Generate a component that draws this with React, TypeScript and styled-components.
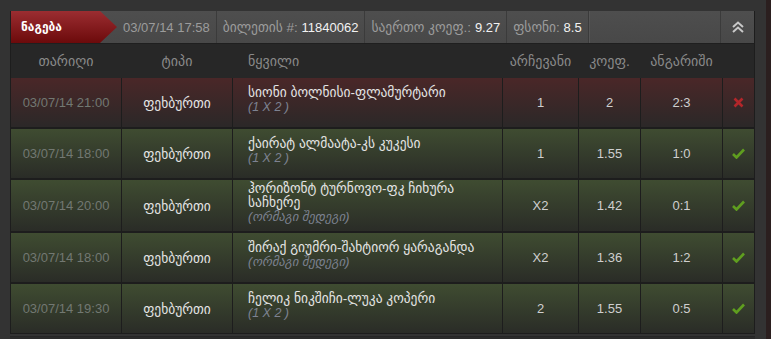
import styled, { createGlobalStyle } from "styled-components";

type Bet = {
  date: string;
  type: string;
  name: string;
  market: string;
  pick: string;
  odds: string;
  score: string;
  won: boolean;
};

const bets: Bet[] = [
  { date: "03/07/14 21:00", type: "ფეხბურთი", name: "სიონი ბოლნისი-ფლამურტარი", market: "(1 X 2 )", pick: "1", odds: "2", score: "2:3", won: false },
  { date: "03/07/14 18:00", type: "ფეხბურთი", name: "ქაირატ ალმაატა-კს კუკესი", market: "(1 X 2 )", pick: "1", odds: "1.55", score: "1:0", won: true },
  { date: "03/07/14 20:00", type: "ფეხბურთი", name: "ჰორიზონტ ტურნოვო-ფკ ჩიხურა საჩხერე", market: "(ორმაგი შედეგი)", pick: "X2", odds: "1.42", score: "0:1", won: true },
  { date: "03/07/14 18:00", type: "ფეხბურთი", name: "შირაქ გიუმრი-შახტიორ ყარაგანდა", market: "(ორმაგი შედეგი)", pick: "X2", odds: "1.36", score: "1:2", won: true },
  { date: "03/07/14 19:30", type: "ფეხბურთი", name: "ჩელიკ ნიკშიჩი-ლუკა კოპერი", market: "(1 X 2 )", pick: "2", odds: "1.55", score: "0:5", won: true },
];

const GlobalStyle = createGlobalStyle`
  body {
    margin: 0;
    background: #333333;
    font-family: "Liberation Sans", "DejaVu Sans", Arial, sans-serif;
    font-size: 13px;
  }
`;

const COLS = "110px 110px 269px 75px 61px 81px 31px";

export default function App() {
  return (
    <>
      <GlobalStyle />
      <Page>
        <Column>
          <Panel>
            <TicketBar>
              <Badge>ნაგება</Badge>
              <BarItem>
                <Value $dim>03/07/14 17:58</Value>
              </BarItem>
              <BarItem>
                ბილეთის #: <Value>11840062</Value>
              </BarItem>
              <BarItem>
                საერთო კოეფ.: <Value>9.27</Value>
              </BarItem>
              <BarItem>
                ფსონი: <Value>8.5</Value>
              </BarItem>
              <Spacer />
              <CollapseButton>
                <svg width="14" height="12" viewBox="0 0 14 12" fill="none" stroke="#c8c8c8" strokeWidth="2">
                  <path d="M2 6 L7 1.5 L12 6" />
                  <path d="M2 11 L7 6.5 L12 11" />
                </svg>
              </CollapseButton>
            </TicketBar>
            <HeadRow>
              <HeadCell>თარიღი</HeadCell>
              <HeadCell>ტიპი</HeadCell>
              <HeadCell $left>ნყვილი</HeadCell>
              <HeadCell>არჩევანი</HeadCell>
              <HeadCell>კოეფ.</HeadCell>
              <HeadCell>ანგარიში</HeadCell>
              <HeadCell />
            </HeadRow>
            <Body>
              {bets.map((b, i) => (
                <Row key={i} $won={b.won}>
                  <DateCell>{b.date}</DateCell>
                  <Cell>{b.type}</Cell>
                  <NameCell>
                    <span>{b.name}</span>
                    <Market>{b.market}</Market>
                  </NameCell>
                  <NumCell>{b.pick}</NumCell>
                  <NumCell>{b.odds}</NumCell>
                  <NumCell>{b.score}</NumCell>
                  <Cell>
                    {b.won ? (
                      <svg width="13" height="11" viewBox="0 0 13 11">
                        <path d="M1 6 L4.5 9.5 L12 1.5" fill="none" stroke="#5f9e1f" strokeWidth="2.6" />
                      </svg>
                    ) : (
                      <svg width="11" height="11" viewBox="0 0 11 11">
                        <path d="M1.5 1.5 L9.5 9.5 M9.5 1.5 L1.5 9.5" fill="none" stroke="#b3262a" strokeWidth="2.6" />
                      </svg>
                    )}
                  </Cell>
                </Row>
              ))}
            </Body>
          </Panel>
          <NextPanel />
        </Column>
        <SideStrip />
      </Page>
    </>
  );
}

const Page = styled.div`
  display: flex;
  height: 339px;
  overflow: hidden;
  padding: 11px 0 0 10px;
  box-sizing: border-box;
`;

const Column = styled.div`
  display: flex;
  flex-direction: column;
  gap: 2px;
`;

const Panel = styled.div`
  width: 745px;
  box-sizing: border-box;
  border: 1px solid #1d1d1d;
  border-top: none;
  background: #1d1d1d;
`;

const TicketBar = styled.div`
  display: flex;
  align-items: stretch;
  height: 32px;
  background: linear-gradient(#4e4e4e, #484848);
  border-bottom: 1px solid #1f1f1f;
  color: #9c9c9c;
  font-size: 13.5px;
`;

const Badge = styled.div`
  display: flex;
  align-items: center;
  width: 106px;
  padding-left: 10px;
  box-sizing: border-box;
  background: linear-gradient(#9b2d31, #6c0a0b);
  color: #ffffff;
  font-family: "DejaVu Sans", sans-serif;
  font-weight: bold;
  font-size: 12px;
  clip-path: polygon(0 0, 89px 0, 106px 50%, 89px 100%, 0 100%);
`;

const BarItem = styled.div`
  display: flex;
  align-items: center;
  padding: 0 6px;
  border-right: 1px solid #3b3b3b;
  white-space: pre;
`;

const Value = styled.span<{ $dim?: boolean }>`
  color: ${(p) => (p.$dim ? "#9c9c9c" : "#f2f2f2")};
  font-size: 13px;
`;

const Spacer = styled.div`
  flex: 1;
  border-left: 1px solid #555;
  border-right: 1px solid #3b3b3b;
`;

const CollapseButton = styled.div`
  width: 33px;
  display: flex;
  align-items: center;
  justify-content: center;
`;

const HeadRow = styled.div`
  display: grid;
  grid-template-columns: ${COLS};
  column-gap: 1px;
  height: 34px;
  background: #272727;
`;

const HeadCell = styled.div<{ $left?: boolean }>`
  display: flex;
  align-items: center;
  justify-content: ${(p) => (p.$left ? "flex-start" : "center")};
  padding-left: ${(p) => (p.$left ? "15px" : "0")};
  color: #8a8a8a;
  font-size: 14px;
`;

const Body = styled.div`
  display: flex;
  flex-direction: column;
  gap: 2px;
`;

const Row = styled.div<{ $won: boolean }>`
  display: grid;
  grid-template-columns: ${COLS};
  column-gap: 1px;
  min-height: 49px;
  --row-bg: ${(p) =>
    p.$won
      ? "linear-gradient(#3f4c31, #2a2c27)"
      : "linear-gradient(#4a2728, #2b2828)"};
`;

const Cell = styled.div`
  display: flex;
  align-items: center;
  justify-content: center;
  background: var(--row-bg);
  color: #e4e4e4;
  font-size: 13.5px;
`;

const DateCell = styled(Cell)`
  color: #727872;
  font-size: 13px;
`;

const NumCell = styled(Cell)`
  color: #cfcfcf;
  font-size: 13px;
`;

const NameCell = styled(Cell)`
  flex-direction: column;
  align-items: flex-start;
  justify-content: center;
  padding: 2px 12px 7px 15px;
  line-height: 14px;
`;

const Market = styled.span`
  color: #7d8291;
  font-style: italic;
  font-size: 12.5px;
`;

const NextPanel = styled.div`
  width: 745px;
  height: 10px;
  background: #2b2b2b;
  border-top: 1px solid #262626;
`;

const SideStrip = styled.div`
  width: 5px;
  margin-left: 11px;
  margin-top: -11px;
  background: #2b1f1f;
`;
